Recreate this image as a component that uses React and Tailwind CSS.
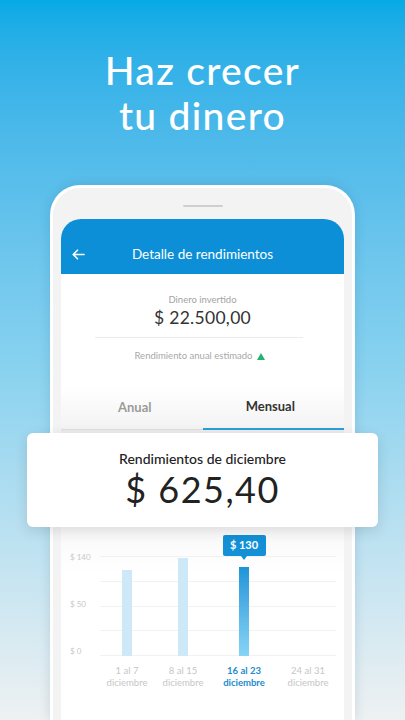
import React from 'react';

const bars = [
  { label: '1 al 7', w: 'w-[60px]', h: 'h-[86px]', active: false, show: true },
  { label: '8 al 15', w: 'w-[52px]', h: 'h-[98px]', active: false, show: true },
  { label: '16 al 23', w: 'w-[70px]', h: 'h-[89px]', active: true, show: true },
  { label: '24 al 31', w: 'w-[58px]', h: 'h-0', active: false, show: false },
];

const ArrowLeft = () => (
  <svg width="13" height="11" viewBox="0 0 13 11" fill="none" stroke="white" strokeWidth="1.6" strokeLinecap="round" strokeLinejoin="round">
    <path d="M12 5.5H1.5M5.5 1.2L1.2 5.5L5.5 9.8" />
  </svg>
);

export default function App() {
  return (
    <div
      className="relative w-[405px] h-[720px] overflow-hidden flex flex-col bg-gradient-to-b from-[#04aae6] via-[#86d1ef] to-[#eef1f2]"
      style={{ fontFamily: 'Lato, "Open Sans", sans-serif' }}
    >
      {/* headline */}
      <h1 className="pt-[48px] text-center text-white text-[39px] leading-[45px] font-medium tracking-[1.3px]">
        Haz crecer
        <br />
        tu dinero
      </h1>

      {/* phone */}
      <div className="mt-[47px] ml-[50px] w-[305px] flex-1 rounded-t-[30px] border-[3px] border-b-0 border-white bg-[#f3f3f3] shadow-[0_0_12px_rgba(0,60,100,0.15)] flex flex-col items-center">
        <div className="mt-[17px] w-[40px] h-[2px] rounded-full bg-[#cfcfcf]" />
        <div className="mt-[12px] w-[283px] flex-1 rounded-t-[20px] overflow-hidden bg-white flex flex-col">
          {/* header */}
          <div className="h-[55px] bg-[#0d8fd7] flex items-center pt-[15px] px-[11px]">
            <ArrowLeft />
            <div className="flex-1 text-center text-white text-[13.5px] pr-[13px]">Detalle de rendimientos</div>
          </div>

          {/* invested */}
          <div className="flex flex-col items-center pt-[19px]">
            <div className="text-[9.5px] leading-[13px] text-[#a3a3a3]">Dinero invertido</div>
            <div className="text-[17.5px] leading-[24px] text-[#333] tracking-[0.3px]">$ 22.500,00</div>
            <div className="mt-[7px] w-[208px] h-px bg-[#ececec] -ml-[8px]" />
            <div className="mt-[12px] flex items-center gap-[4px] text-[9.5px] leading-[12px] text-[#a8a8a8] -ml-[6px]">
              Rendimiento anual estimado
              <span className="w-0 h-0 border-l-[4px] border-r-[4px] border-b-[7px] border-l-transparent border-r-transparent border-b-[#22b36f]" />
            </div>
          </div>

          {/* tabs */}
          <div className="mt-[24px] h-[44px] flex bg-gradient-to-b from-white to-[#f3f3f3]">
            <div className="flex-1 flex items-center justify-center border-b border-[#dedede] text-[13px] font-bold text-[#9b9b9b] pl-[6px]">Anual</div>
            <div className="flex-1 flex items-center justify-center border-b-2 border-[#2a9fd8] text-[13px] font-bold text-[#333] pr-[6px]">Mensual</div>
          </div>

          {/* chart section */}
          <div className="flex-1 bg-gradient-to-b from-[#ececec] via-white to-white pt-[104px]">
            <div className="flex">
              <div className="w-[39px]" />
              <div>
                <div className="grid">
                  {/* gridlines */}
                  <div className="col-start-1 row-start-1 flex flex-col justify-between h-[122px] pt-[22px]">
                    {[0, 1, 2, 3, 4].map((i) => (
                      <div key={i} className="h-px bg-[#f1f1f1] w-[236px]" />
                    ))}
                  </div>
                  {/* bars */}
                  <div className="col-start-1 row-start-1 flex items-end h-[122px] -ml-[3px]">
                    {bars.map((b) => (
                      <div key={b.label} className={`${b.w} flex flex-col items-center`}>
                        {b.active && (
                          <div className="mb-[7px] flex flex-col items-center">
                            <div className="w-[43px] h-[21px] rounded-[2px] bg-[#1390d6] text-white text-[11px] font-bold flex items-center justify-center">$ 130</div>
                            <div className="w-0 h-0 border-l-[3px] border-r-[3px] border-t-[4px] border-l-transparent border-r-transparent border-t-[#1390d6]" />
                          </div>
                        )}
                        {b.show && (
                          <div className={`w-[10px] ${b.h} ${b.active ? 'bg-gradient-to-b from-[#1a95d8] to-[#86d4f6]' : 'bg-[#cde9f7]'}`} />
                        )}
                      </div>
                    ))}
                  </div>
                </div>
                {/* x labels */}
                <div className="flex -ml-[3px] mt-[9px]">
                  {bars.map((b) => (
                    <div key={b.label} className={`${b.w} text-center text-[9.5px] leading-[12px] ${b.active ? 'text-[#1a8ccd] font-bold' : 'text-[#c6c6c6]'}`}>
                      {b.label}
                      <br />
                      diciembre
                    </div>
                  ))}
                </div>
              </div>
            </div>
          </div>
        </div>
      </div>

      {/* y-axis labels */}
      <div className="absolute left-[70px] top-[552px] h-[104px] flex flex-col justify-between text-[8px] leading-[10px] text-[#c9c9c9]">
        <span>$ 140</span>
        <span>$ 50</span>
        <span>$ 0</span>
      </div>

      {/* floating card */}
      <div className="absolute left-[27px] top-[433px] w-[351px] h-[94px] rounded-[6px] bg-white shadow-[0_4px_14px_rgba(0,0,0,0.12)] flex flex-col items-center pt-[17px]">
        <div className="text-[14px] leading-[18px] font-medium text-[#222]">Rendimientos de diciembre</div>
        <div className="text-[36px] leading-[42px] text-[#222] tracking-[1.5px]">$ 625,40</div>
      </div>
    </div>
  );
}
